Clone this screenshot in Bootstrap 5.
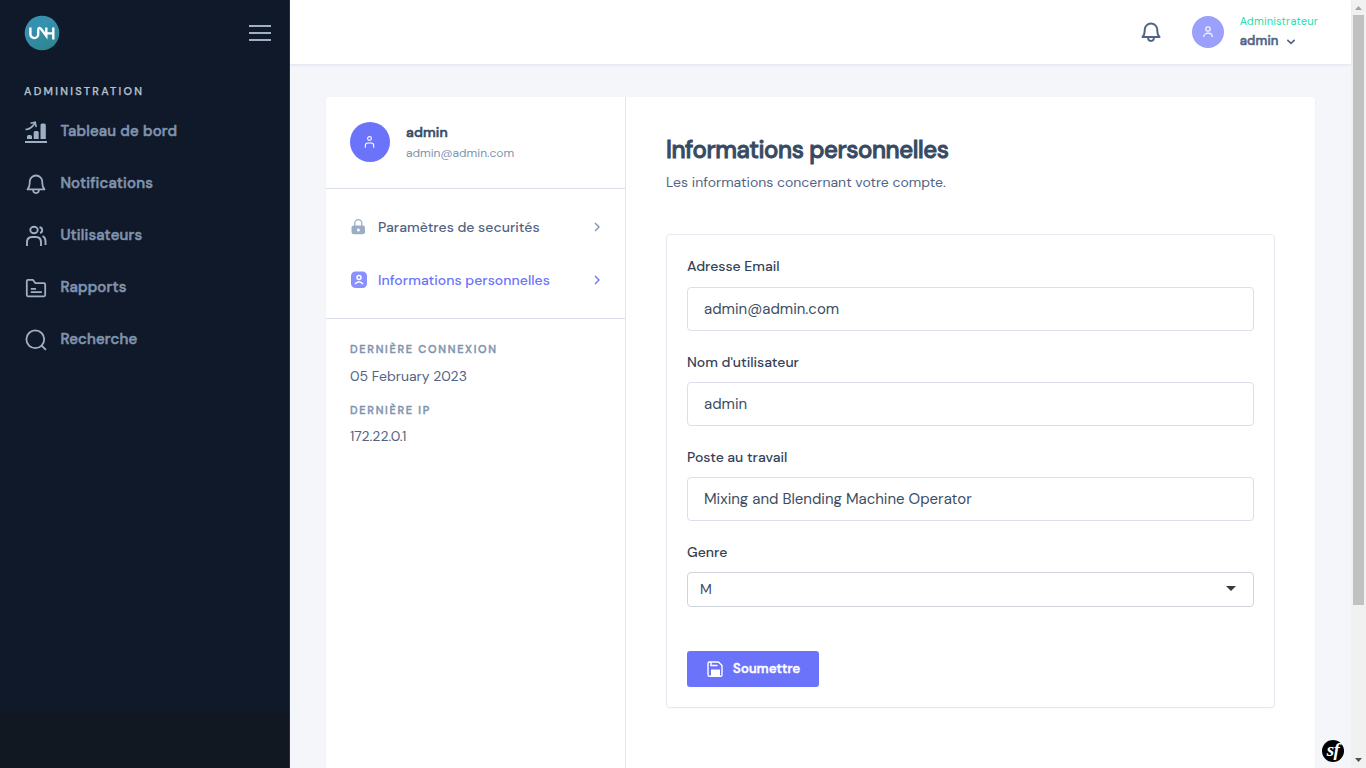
<!DOCTYPE html>
<html lang="fr">
<head>
<meta charset="utf-8">
<meta name="viewport" content="width=device-width, initial-scale=1">
<title>Informations personnelles</title>
<link href="https://cdn.jsdelivr.net/npm/bootstrap@5.3.0/dist/css/bootstrap.min.css" rel="stylesheet">
<style>
body{font-family:"DM Sans",Inter,"Liberation Sans",sans-serif;font-size:14px;line-height:20px;color:#526484;background:#f5f6fa;height:768px;overflow:hidden}
svg{display:block;flex:none}
a{text-decoration:none}
.heavy{font-weight:500;-webkit-text-stroke:.55px currentColor}
.side{width:290px;background:linear-gradient(#101929 0,#101929 708px,#111821 718px);border-right:1px solid #203247}
.side-head{height:65px;padding:0 17px 0 24px}
.side-label{font-size:11px;letter-spacing:2.25px;-webkit-text-stroke-width:.25px;color:#b7c2d0;padding:16px 24px 0;height:41px;line-height:20px}
.side .nav-link{height:52px;padding:0 24px;gap:12px;color:#8094ae;font-size:15px;font-weight:500}
.side .nav-link span{margin:-2px 0 0 .4px;letter-spacing:.18px}
.side .nav-link svg{color:#9fafc4}
.topbar{height:65px;background:#fff;border-bottom:1px solid #e5e9f2;box-shadow:0 1px 3px rgba(54,74,99,.06);padding-right:33px}
.bell{margin-right:25px}
.avatar{width:32px;height:32px;background:#9ba0fc;color:#fff}
.avatar.big{width:40px;height:40px;background:#6b73fb}
.role{font-size:11px;letter-spacing:.2px;line-height:14px;color:#1ee0ac;padding-top:2px}
.uname{font-size:13px;line-height:16px;letter-spacing:.15px;color:#526484;margin-top:5px}
.panel{margin:32px 36px 0;background:#fff;border-radius:4px 4px 0 0;box-shadow:0 1px 3px rgba(54,74,99,.05)}
.aside-col{width:300px;border-right:1px solid #e0e5ee}
.line-b{border-bottom:1px solid #dbdfea}
.user-box{height:92px;padding:25px 24px 0}
.text-name{color:#364a63;letter-spacing:.15px}
.mail{font-size:12px;line-height:22px;color:#8094ae}
.menu-box{height:130px;padding:12px 24px}
.menu-box a{height:53px;color:#526484;font-weight:500}
.menu-box a.active{color:#6b73fb}
.menu-box svg{margin-top:-2px}
.menu-text{margin:-2px 0 0 10px;letter-spacing:.03px}
.last-box{padding-top:20px}
.cap{font-size:11px;letter-spacing:1.7px;-webkit-text-stroke-width:.4px;color:#8094ae;line-height:20px}
.v1{margin:7px 0 14px}
.v2{margin-top:6px}
.form-col{padding:40px 40px 0}
.form-col h1{font-size:24px;line-height:26px;letter-spacing:-.44px;-webkit-text-stroke-width:.9px;color:#364a63;margin:0}
.sub{margin-top:9px}
.box{margin-top:42px;height:474px;border:1px solid #e5e9f2;border-radius:4px;padding:20px;box-shadow:0 1px 2px rgba(54,74,99,.04)}
.form-label{font-size:14px;font-weight:500;color:#344357;line-height:20px;margin:0;padding-top:2px;height:32px;display:block}
.first .form-label{padding-top:1px}
.form-control{height:44px;font-size:15px;color:#3c4d62;border-color:#dbdfea;border-radius:4px;padding:0 16px}
.fgroup{height:95px}
.pick{height:35px;border:1px solid #ced4da;border-radius:4px;padding:0 17px 0 12px;color:#3c4d62}
.pick span{margin-top:-2px}
.caret{border:5px solid transparent;border-top-color:#343a40;border-bottom:0;margin-top:-2px}
.btn-go{width:132px;height:36px;background:#6b73fb;color:#fff;font-size:13px;letter-spacing:.26px;border-radius:3px;margin-top:44px;padding:0 0 0 19px;gap:9px;border:0}
.scroller{width:15px;background:#f1f1f1}
.thumb{width:11px;height:590px;background:#c1c1c1}
.sf{right:7px;bottom:6px;width:22px;height:22px;background:#000;color:#fff;font:italic bold 19px/19px "Liberation Serif",serif;letter-spacing:-.5px}
</style>
</head>
<body class="d-flex">
<nav class="side flex-shrink-0">
  <div class="side-head d-flex align-items-center justify-content-between">
    <svg width="36" height="36" viewBox="0 0 36 36"><defs><linearGradient id="g" x1="0" y1="0" x2=".5" y2="1"><stop offset=".4" stop-color="#3690b0"/><stop offset="1" stop-color="#2e8791"/></linearGradient></defs><circle cx="18" cy="18" r="17.3" fill="url(#g)"/><path d="M6.800 12.800v6.700a3.900 3.900 0 0 0 7.800 0v-4c0-2.500 1.600-3 2.900-1.200l5.200 6.900V12.800M22.700 18.700h7M29.700 12.800v12" transform="translate(-.4 -.3)" fill="none" stroke="#fff" stroke-width="2.400"/></svg>
    <svg width="24" height="24" viewBox="0 0 24 24" stroke="#9fafc4" stroke-width="2"><path d="M1 5h22M1 12h22M1 19h22"/></svg>
  </div>
  <div class="side-label heavy">ADMINISTRATION</div>
  <div class="nav flex-column">
    <a href="#" class="nav-link d-flex align-items-center"><svg width="24" height="24" viewBox="0 0 24 24" fill="currentColor"><path d="M1 21h22v1.900H1zM3 19v-2.400q0-1.600 1.600-1.600h1.800q1.600 0 1.600 1.600V19zM9.700 19v-6.500q0-1.500 1.500-1.500h2q1.500 0 1.500 1.500V19zM16.500 19V5q0-1.500 1.500-1.500h2.300q1.500 0 1.500 1.500v14z"/><path d="M1.500 9.500C6 9.500 8.500 7 11 3M6.500 3.200l4.700-.9 1 4.900" fill="none" stroke="currentColor" stroke-width="1.600"/></svg><span class="heavy">Tableau de bord</span></a>
    <a href="#" class="nav-link d-flex align-items-center"><svg width="24" height="24" viewBox="0 0 24 24" fill="none" stroke="currentColor" stroke-width="1.800" stroke-linejoin="round"><path d="M3.500 17.300h17c-1.700-1.700-2.200-3-2.200-6V9.800a6.300 6.300 0 0 0-12.600 0v1.500c0 3-.5 4.300-2.200 6zM9 17.300c0 5 6 5 6 0"/></svg><span class="heavy">Notifications</span></a>
    <a href="#" class="nav-link d-flex align-items-center"><svg width="24" height="24" viewBox="0 0 24 24" fill="none" stroke="currentColor" stroke-width="1.900"><ellipse cx="10" cy="6" rx="3.700" ry="3.200"/><path d="M3 22v-3.500c0-3.500 1.500-5.500 5-5.500h4c3.500 0 5 2 5 5.500V22M15.500 3.200c3.500.3 3.500 5.200.5 5.700M18.500 12.200c2 .8 3 2.800 3 5.300V21"/></svg><span class="heavy">Utilisateurs</span></a>
    <a href="#" class="nav-link d-flex align-items-center"><svg width="24" height="24" viewBox="0 0 24 24" fill="none" stroke="currentColor" stroke-width="1.800" stroke-linejoin="round"><path d="M4 3.800h4.800l2.700 3.400H20q1.200 0 1.200 1.200v10.700q0 1.200-1.200 1.200H4.200q-1.400 0-1.400-1.400V5q0-1.200 1.200-1.200zM6.800 12.800H12M6.800 16.200h11"/></svg><span class="heavy">Rapports</span></a>
    <a href="#" class="nav-link d-flex align-items-center"><svg width="24" height="24" viewBox="0 0 24 24" fill="none" stroke="currentColor" stroke-width="1.800"><circle cx="11.300" cy="11.300" r="8.900"/><path d="M17.400 17.400l4.500 4.500"/></svg><span class="heavy">Recherche</span></a>
  </div>
</nav>
<main class="flex-grow-1 d-flex flex-column position-relative">
  <header class="topbar d-flex align-items-center justify-content-end flex-shrink-0">
    <svg class="bell" width="24" height="24" viewBox="0 0 24 24" fill="none" stroke="#526484" stroke-width="2" stroke-linejoin="round"><path d="M3.500 17h17c-1.700-1.700-2.200-3-2.200-6V9.800a6.300 6.300 0 0 0-12.600 0V11c0 3-.5 4.300-2.200 6zM9 17c0 5.200 6 5.200 6 0"/></svg>
    <div class="avatar rounded-circle d-flex align-items-center justify-content-center ms-1 me-3"><svg width="14" height="14" viewBox="0 0 14 14" fill="none" stroke="currentColor" stroke-width="1.100"><circle cx="7" cy="4" r="2.200"/><path d="M2.700 12c0-5.200 8.600-5.200 8.600 0"/></svg></div>
    <div class="pb-1"><div class="role">Administrateur</div><div class="uname d-flex align-items-center"><span class="heavy">admin</span><svg class="ms-2" width="8" height="8" viewBox="0 0 8 8" fill="none" stroke="currentColor" stroke-width="1.700"><path d="M.3 3l3.700 3.300L7.700 3"/></svg></div></div>
  </header>
  <section class="panel d-flex flex-grow-1">
    <aside class="aside-col flex-shrink-0">
      <div class="user-box line-b d-flex gap-3">
        <div class="avatar big rounded-circle d-flex align-items-center justify-content-center"><svg width="14" height="14" viewBox="0 0 14 14" fill="none" stroke="currentColor" stroke-width="1.100"><circle cx="6.500" cy="3.500" r="1.900"/><path d="M2.300 12.700v-2Q2.300 8 5 8h3q2.700 0 2.700 2.700v2"/></svg></div>
        <div><div class="heavy text-name">admin</div><div class="mail">admin@admin.com</div></div>
      </div>
      <div class="menu-box line-b">
        <a href="#" class="d-flex align-items-center"><svg width="18" height="18" viewBox="0 0 18 18" fill="#9badc4"><path d="M4 7.500h9q2 0 2 2V14q0 2.300-2.300 2.300H3.800Q1.500 16.300 1.500 14V9.500q0-2 2.500-2z"/><path d="M4.800 8V5.200a3.500 3.500 0 0 1 7 0V8" fill="none" stroke="#9badc4" stroke-width="1.300"/><circle cx="8.400" cy="12" r="1.500" fill="#fff"/></svg><span class="menu-text flex-grow-1">Paramètres de securités</span><svg width="8" height="10" viewBox="0 0 8 10" fill="none" stroke="#8094ae" stroke-width="1.400"><path d="M2 1l4 4-4 4"/></svg></a>
        <a href="#" class="d-flex align-items-center active"><svg width="18" height="18" viewBox="0 0 18 18"><rect x="1" y=".5" width="16" height="16.500" rx="4.500" fill="#8b91fc"/><g fill="none" stroke="#fff" stroke-width="1.500"><circle cx="9" cy="6.500" r="2"/><path d="M5 13q4-4.500 8 0"/></g></svg><span class="menu-text flex-grow-1">Informations personnelles</span><svg width="8" height="10" viewBox="0 0 8 10" fill="none" stroke="#6b73fb" stroke-width="1.400"><path d="M2 1l4 4-4 4"/></svg></a>
      </div>
      <div class="px-4 last-box">
        <div class="cap heavy">DERNIÈRE CONNEXION</div><div class="v1">05 February 2023</div>
        <div class="cap heavy">DERNIÈRE IP</div><div class="v2">172.22.0.1</div>
      </div>
    </aside>
    <div class="form-col flex-grow-1">
      <h1 class="heavy">Informations personnelles</h1>
      <div class="sub">Les informations concernant votre compte.</div>
      <form class="box">
        <div class="fgroup first"><label class="form-label" for="mail">Adresse Email</label><input id="mail" class="form-control shadow-none" value="admin@admin.com"></div>
        <div class="fgroup"><label class="form-label" for="user">Nom d'utilisateur</label><input id="user" class="form-control shadow-none" value="admin"></div>
        <div class="fgroup"><label class="form-label" for="job">Poste au travail</label><input id="job" class="form-control shadow-none" value="Mixing and Blending Machine Operator"></div>
        <label class="form-label">Genre</label>
        <div class="pick d-flex align-items-center justify-content-between"><span>M</span><i class="caret"></i></div>
        <button type="button" class="btn btn-go d-flex align-items-center"><svg width="18" height="18" viewBox="0 0 18 18" fill="none" stroke="#fff" stroke-width="1.400"><path d="M3.500 2h9L16 5.500V15q0 1.200-1.200 1.200H3.500Q2 16.200 2 14.700V3.500Q2 2 3.500 2z" stroke-linejoin="round"/><path d="M5 2v3.500h6.500"/><path d="M5 16V9.500h9V16z" fill="#fff" stroke="none"/></svg><span class="heavy">Soumettre</span></button>
      </form>
    </div>
  </section>
  <div class="sf position-absolute rounded-circle text-center">sf</div>
</main>
<div class="scroller flex-shrink-0 d-flex flex-column align-items-center">
  <svg width="15" height="15" viewBox="0 0 15 15"><path d="M4 10h7L7.500 6z" fill="#a3a3a3"/></svg>
  <div class="thumb"></div>
  <svg class="mt-auto" width="15" height="15" viewBox="0 0 15 15"><path d="M4 5h7L7.500 9z" fill="#505050"/></svg>
</div>
<script src="https://cdn.jsdelivr.net/npm/bootstrap@5.3.0/dist/js/bootstrap.bundle.min.js"></script>
</body>
</html>
